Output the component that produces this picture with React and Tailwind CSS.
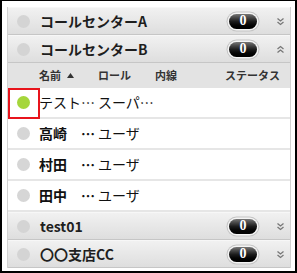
import React from 'react';

const groups = [
  { name: 'コールセンターA', count: 0, open: false },
  { name: 'コールセンターB', count: 0, open: true },
  { name: 'test01', count: 0, open: false },
  { name: '〇〇支店CC', count: 0, open: false },
];

const members = [
  { name: 'テスト…', role: 'スーパ…', online: true },
  { name: '高崎　…', role: 'ユーザ', online: false },
  { name: '村田　…', role: 'ユーザ', online: false },
  { name: '田中　…', role: 'ユーザ', online: false },
];

const Chevron = ({ up }) => (
  <svg width="9" height="9" viewBox="0 0 9 9" className={up ? 'rotate-180' : ''}>
    <polyline points="1.5,1.5 4.5,4 7.5,1.5" fill="none" stroke="#777" strokeWidth="1.3" />
    <polyline points="1.5,5 4.5,7.5 7.5,5" fill="none" stroke="#777" strokeWidth="1.3" />
  </svg>
);

const Badge = ({ value }) => (
  <div className="flex h-[15px] w-[28px] items-center justify-center rounded-full bg-gradient-to-b from-[#777] via-[#1c1c1c] to-[#000] shadow-[0_0_0_1.5px_#f4f4f4,0_0_0_2.5px_#c4c4c4]">
    <span className="text-[14px] font-bold leading-none text-white [font-family:'Liberation_Serif',serif]">{value}</span>
  </div>
);

const GroupHeader = ({ group }) => (
  <div className="flex h-[28px] items-center border-b border-[#c6c6c6] border-t border-t-[#f7f7f7] bg-gradient-to-b from-[#f1f1f1] to-[#dedede] pl-[9px] pr-[5px]">
    <span className="h-[13px] w-[13px] shrink-0 rounded-full bg-[#d4d4d4]" />
    <span className="ml-[10px] flex-1 text-[14px] font-bold text-[#1e1e1e]">{group.name}</span>
    <Badge value={group.count} />
    <span className="ml-[19px] flex w-[9px] justify-center">
      <Chevron up={group.open} />
    </span>
  </div>
);

const MemberRow = ({ m, marked }) => (
  <div className="relative flex h-[31px] items-center border-b-2 border-[#e6e6e6] bg-white">
    <div className="flex w-[31px] shrink-0 justify-center">
      <span className={`h-[13px] w-[13px] rounded-full ${m.online ? 'bg-[#a5d63b]' : 'bg-[#d6d6d6]'}`} />
    </div>
    <span className={`w-[59px] shrink-0 text-[14px] text-[#111] ${m.online ? 'font-normal' : 'font-bold'}`}>{m.name}</span>
    <span className="w-[57px] shrink-0 text-[14px] text-[#111]">{m.role}</span>
    {marked && (
      <div className="absolute left-0 top-0 h-[31px] w-[32px] border-2 border-[#e8141c]" />
    )}
  </div>
);

export default function App() {
  return (
    <div className="h-[273px] w-[297px] border-x-2 border-b-2 border-t border-black bg-white pl-[5px] pr-[4px] pt-[6px] [font-family:'Noto_Sans_CJK_JP',sans-serif]">
      <div className="border-x border-[#d2d2d2]">
        <GroupHeader group={groups[0]} />
        <GroupHeader group={groups[1]} />
        <div className="flex h-[25px] items-center bg-[#e3e3e3] text-[11px] font-bold text-[#333]">
          <span className="w-[31px] shrink-0" />
          <span className="flex w-[59px] shrink-0 items-center gap-[6px]">
            名前
            <svg width="7" height="5" viewBox="0 0 7 5"><polygon points="3.5,0 7,5 0,5" fill="#333" /></svg>
          </span>
          <span className="w-[57px] shrink-0">ロール</span>
          <span className="w-[70px] shrink-0">内線</span>
          <span>ステータス</span>
        </div>
        {members.map((m, i) => (
          <MemberRow key={i} m={m} marked={i === 0} />
        ))}
        <GroupHeader group={groups[2]} />
        <GroupHeader group={groups[3]} />
      </div>
    </div>
  );
}
